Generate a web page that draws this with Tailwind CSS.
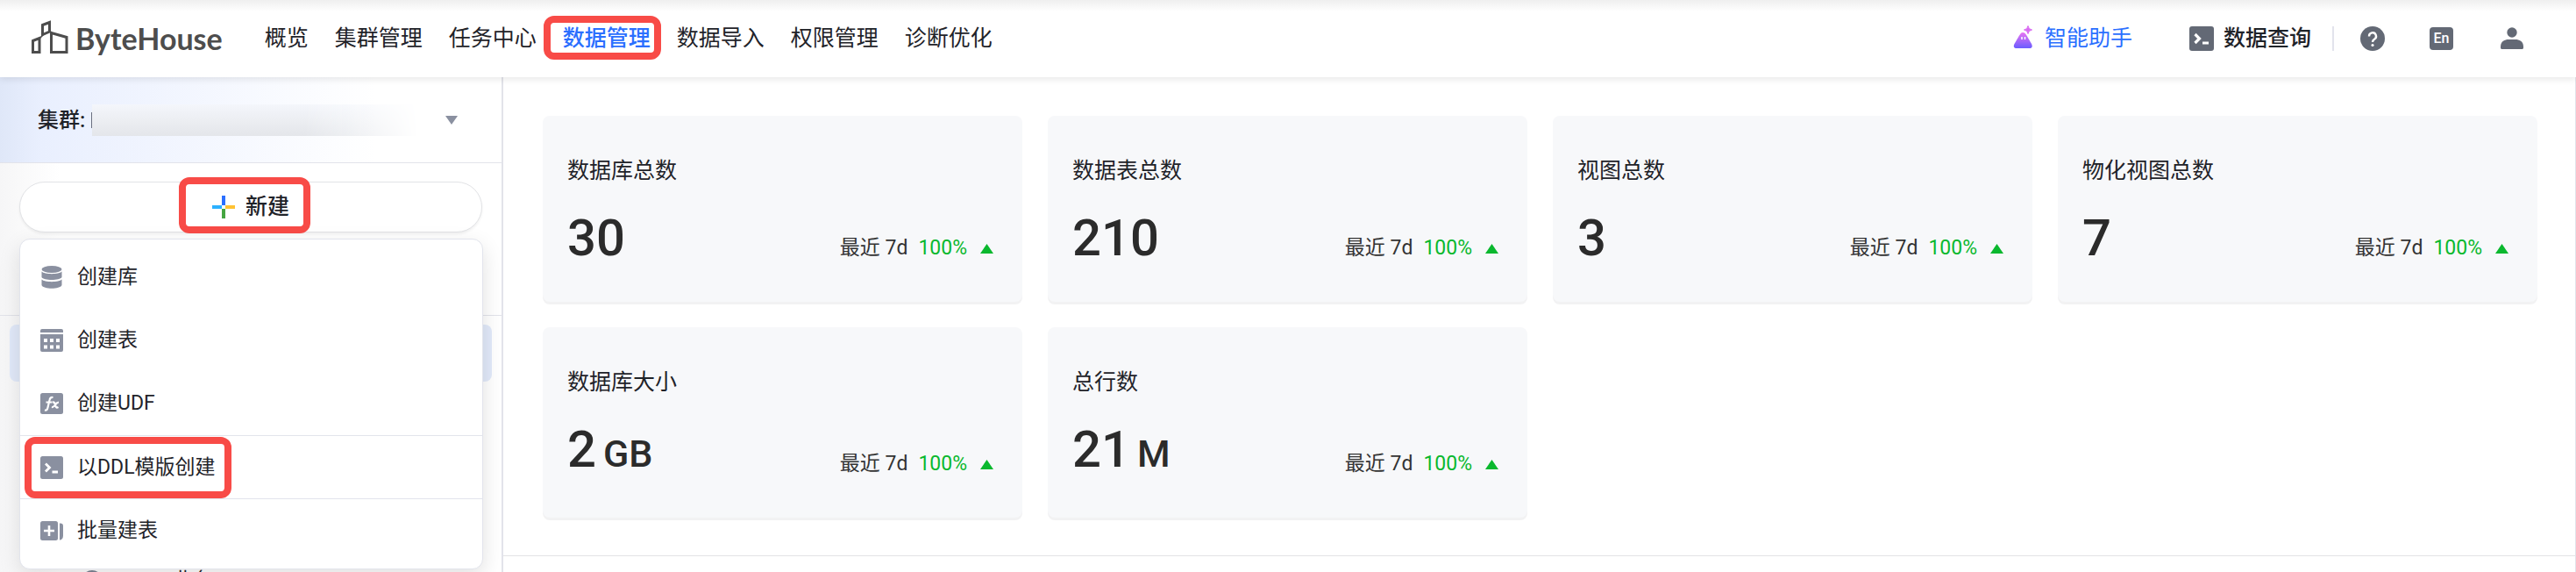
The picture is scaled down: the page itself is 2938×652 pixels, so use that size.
<!DOCTYPE html>
<html lang="zh-CN">
<head>
    <meta charset="UTF-8">
    <meta name="viewport" content="width=device-width, initial-scale=1.0">
    <title>ByteHouse 数据管理</title>
    <script src="https://cdn.jsdelivr.net/npm/@tailwindcss/browser@4"></script>
</head>
<body class="bg-white font-['Roboto','Noto_Sans_CJK_SC',sans-serif] text-[#1f2329] h-screen overflow-hidden flex flex-col">
    <!-- Barre du haut -->
    <header class="relative z-10 h-[88px] shrink-0 flex items-center bg-linear-to-b from-[#efefef] via-white via-15% to-white shadow-[0_2px_8px_rgba(0,0,0,0.10)] pl-9 pr-[60px] text-[25px] leading-9">
        <a href="#" class="flex items-center gap-2 text-[#4d4d4d]">
            <svg class="w-[42px] h-[42px]" viewBox="0 0 42 42" fill="none" stroke="currentColor" stroke-width="3">
                <path d="M1.500 23.500 9 20.500V36.500H1.500ZM12.500 5.500 20.500 2.500V13L12.500 16.500ZM22.500 14.500 40 19.500V36.500H22.500Z"/>
                <path d="M9 21 14 16M21 12 23 15" stroke-width="1.500"/>
            </svg>
            <span class="font-['Lato'] font-bold text-[34px] leading-10">ByteHouse</span>
        </a>
        <nav class="flex items-center gap-[30px] ml-12">
            <a href="#">概览</a>
            <a href="#">集群管理</a>
            <a href="#">任务中心</a>
            <a href="#" class="relative font-medium text-[#2b6fff]">数据管理<span class="absolute -left-[22px] -right-3 -top-2 -bottom-1.5 border-8 border-[#f84b47] rounded-xl"></span></a>
            <a href="#">数据导入</a>
            <a href="#">权限管理</a>
            <a href="#">诊断优化</a>
        </nav>
        <div class="ml-auto flex items-center">
            <a href="#" class="flex items-center gap-3 text-[#2b6fff]">
                <svg class="w-6 h-8" viewBox="0 0 24 32">
                    <defs><linearGradient id="bot" x1="0" y1="0" x2="0" y2="1"><stop offset="0" stop-color="#e873f2"/><stop offset="1" stop-color="#6a5cff"/></linearGradient></defs>
                    <path d="M11 9c2 0 3 1 4.500 3.500L21 22c1.500 3 .5 5-2.500 5H4c-3 0-4-2-2.500-5L7 12.500C8.500 10 9.500 9 11 9Z" fill="url(#bot)"/>
                    <path d="M17 1.500Q17.500 5.500 21.500 6 17.500 6.500 17 10.500 16.500 6.500 12.500 6 16.500 5.500 17 1.500Z" fill="#d96bf2" stroke="#d96bf2"/>
                    <path d="M10 14v3M13.500 14v3" stroke="#fff" stroke-width="1.500"/>
                </svg>
                智能助手
            </a>
            <a href="#" class="flex items-center gap-2.5 ml-16 font-medium">
                <svg class="w-[30px] h-[30px]" viewBox="0 0 30 30"><rect x="1" y="1" width="28" height="28" rx="3" fill="#636975"/><path d="M7.500 10l5 5-5 5M16 20h7" fill="none" stroke="#fff" stroke-width="3.200"/></svg>
                数据查询
            </a>
            <span class="w-0.5 h-7 bg-[#e2e3ec] ml-6"></span>
            <button type="button" aria-label="帮助" class="ml-[30px]">
                <svg class="w-7 h-7" viewBox="0 0 28 28"><circle cx="14" cy="14" r="14" fill="#636975"/><path d="M10 11.500a4 4 0 1 1 6 3.300c-1.400.9-2 1.500-2 3.200" fill="none" stroke="#fff" stroke-width="2.400"/><circle cx="14" cy="21.500" r="1.600" fill="#fff"/></svg>
            </button>
            <button type="button" class="ml-[51px] w-[27px] h-[26px] rounded-sm bg-[#636975] text-white text-base leading-[26px] font-medium">En</button>
            <button type="button" aria-label="用户" class="ml-[54px]">
                <svg class="w-[26px] h-[26px]" viewBox="0 0 26 26" fill="#636975"><circle cx="13" cy="6" r="5.700"/><path d="M0 22c0-6 5-8 9-8h8c4 0 9 2 9 8v1.500c0 1-1 1.500-2 1.500H2c-1 0-2-.5-2-1.500Z"/></svg>
            </button>
        </div>
    </header>

    <div class="flex flex-1 min-h-0">
        <!-- Menu de gauche -->
        <aside class="relative w-[574px] shrink-0 overflow-hidden border-r-2 border-[#e2e3ea] bg-linear-to-r from-[#f6f6f7] via-white via-12% to-white text-[23px]">
            <div class="h-[98px] pl-[43px] pr-[50px] flex items-center border-b border-[#e2e3ea] bg-linear-to-r from-[#dfe7f8] via-[#e9effe] via-8% to-white to-75%">
                <span class="font-medium text-2xl">集群:</span>
                <span class="ml-[7px] w-px h-[18px] bg-[#6b7080]"></span>
                <span class="h-9 w-[372px] bg-linear-to-b from-[#f4f6fb] to-[#e4e6ea] mask-r-from-65%"></span>
                <button type="button" aria-label="选择集群" class="ml-auto">
                    <svg class="w-3.5 h-2.5" viewBox="0 0 14 10"><path d="M0 0h14L7 10Z" fill="#8a90a0"/></svg>
                </button>
            </div>
            <div class="h-[174px] px-[22px] pt-[21px] border-b border-[#e2e3ea]">
                <button type="button" class="w-full h-[58px] rounded-full border border-[#e2e3e6] bg-white shadow-[0_2px_3px_rgba(0,0,0,0.06)] flex items-center justify-center text-[25px] leading-9 font-medium">
                    <span class="relative flex items-center gap-3">
                        <svg class="w-[26px] h-[26px]" viewBox="0 0 26 26"><path d="M11 0h4v11h-4Z" fill="#2b6fff"/><path d="M15 11h11v4H15Z" fill="#ffc233"/><path d="M11 15h4v11h-4Z" fill="#45a541"/><path d="M0 11h11v4H0Z" fill="#2cb1ff"/></svg>
                        新建
                        <span class="absolute -left-[38px] -right-6 -top-4 -bottom-3 border-8 border-[#f84b47] rounded-xl"></span>
                    </span>
                </button>
            </div>
            <div class="mt-2.5 mx-[11px] h-[65px] rounded-lg bg-[#e2eafa]"></div>
            <div class="mt-[209px] pl-[93px] flex items-center gap-20 leading-9">
                <svg class="w-6 h-6" viewBox="0 0 24 24"><circle cx="12" cy="12" r="12" fill="#7d8494"/></svg>
                业务
            </div>

            <!-- Menu déroulant -->
            <ul class="absolute left-[22px] right-[21px] top-[184px] py-[7px] bg-white border border-[#e2e4ec] rounded-xl shadow-[0_8px_24px_rgba(0,0,0,0.12)]">
                <li><button type="button" class="w-full h-[72px] px-[23px] flex items-center gap-4">
                    <svg class="w-[26px] h-[26px]" viewBox="0 0 26 26" fill="#8a90a0"><ellipse cx="13" cy="4" rx="11.500" ry="4"/><path d="M1.500 6.500c3 3.500 20 3.500 23 0v6.500c-2 4-21 4-23 0ZM1.500 15.500c3 3.500 20 3.500 23 0V22c-2 5-21 5-23 0Z"/></svg>
                    创建库
                </button></li>
                <li><button type="button" class="w-full h-[72px] px-[23px] flex items-center gap-4">
                    <svg class="w-[26px] h-[26px]" viewBox="0 0 26 26"><path d="M0 4V2q0-2 2-2h22q2 0 2 2v2ZM0 6h26v18q0 2-2 2H2q-2 0-2-2Z" fill="#8a90a0"/><path d="M4 11h4v4H4ZM11 11h4v4h-4ZM18 11h4v4h-4ZM4 18.500h4v4H4ZM11 18.500h4v4h-4ZM18 18.500h4v4h-4Z" fill="#fff"/></svg>
                    创建表
                </button></li>
                <li><button type="button" class="w-full h-[72px] px-[23px] flex items-center gap-4">
                    <svg class="w-[26px] h-[26px]" viewBox="0 0 26 26"><rect y="1" width="26" height="24" rx="2.500" fill="#8a90a0"/><path d="M5 20.500c2 .5 3-.5 3.500-3L10.500 9c.5-2.500 1.500-3.500 4-3M6.500 11.500h7M14 11.500c2.500-.5 2.500 1 3 3s1 4 3.500 2.500M21 11.500c-2 0-3 1.500-4 3s-2 3-4 2.500" fill="none" stroke="#fff" stroke-width="2.200"/></svg>
                    创建UDF
                </button></li>
                <li class="border-y border-[#e2e4ec]"><button type="button" class="w-full h-[71px] px-[23px] flex items-center gap-4">
                    <span class="relative flex items-center gap-4 leading-9">
                        <svg class="w-[26px] h-[26px]" viewBox="0 0 26 26"><rect width="26" height="26" rx="2.500" fill="#8a90a0"/><path d="M6 8.500l4.500 4.500L6 17.500M13.500 18h6.500" fill="none" stroke="#fff" stroke-width="2.800"/></svg>
                        以DDL模版创建
                        <span class="absolute -inset-x-[18px] -inset-y-[17px] border-8 border-[#f84b47] rounded-xl"></span>
                    </span>
                </button></li>
                <li><button type="button" class="w-full h-[72px] px-[23px] flex items-center gap-4">
                    <svg class="w-[26px] h-[26px]" viewBox="0 0 26 26"><rect y="2" width="20" height="22" rx="2.500" fill="#8a90a0"/><path d="M22 4.500h1q3 0 3 3v11q0 4-3 5h-1Z" fill="#8a90a0"/><path d="M10 7v12M4 13h12" stroke="#fff" stroke-width="2.600"/></svg>
                    批量建表
                </button></li>
            </ul>
        </aside>

        <!-- Statistiques -->
        <main class="flex-1 border-r border-[#e2e3ea]">
            <section class="pl-[45px] pr-[43px] pt-11 pb-[43px] border-b border-[#e2e3e6]">
                <div class="grid grid-cols-4 gap-[29px]" id="cards"></div>
            </section>
        </main>
    </div>

    <script>
        const stats = [
            { title: '数据库总数', value: '30' },
            { title: '数据表总数', value: '210' },
            { title: '视图总数', value: '3' },
            { title: '物化视图总数', value: '7' },
            { title: '数据库大小', value: '2', unit: 'GB' },
            { title: '总行数', value: '21', unit: 'M' },
        ];
        document.getElementById('cards').innerHTML = stats.map(s => `
            <article class="rounded-lg bg-[#f7f8fa] shadow-[0_3px_0_#f2f2f3] pl-7 pr-[33px] pt-[45px] pb-[37px]">
                <h2 class="text-[25px] leading-9">${s.title}</h2>
                <div class="flex items-end justify-between mt-[22px]">
                    <p class="text-[58px] leading-[72px] font-medium text-[#2b2b2b]">${s.value}${s.unit ? `<span class="text-[43px] ml-2">${s.unit}</span>` : ''}</p>
                    <p class="flex items-center text-[23px] leading-9 pb-1.5 text-[#333]">最近 7d<span class="text-[#0ab82e] ml-3">100%</span>
                        <svg class="w-[15px] h-[11px] ml-[15px]" viewBox="0 0 15 11"><path d="M7.500 0 15 11H0Z" fill="#0ab82e"/></svg>
                    </p>
                </div>
            </article>`).join('');
    </script>
</body>
</html>
